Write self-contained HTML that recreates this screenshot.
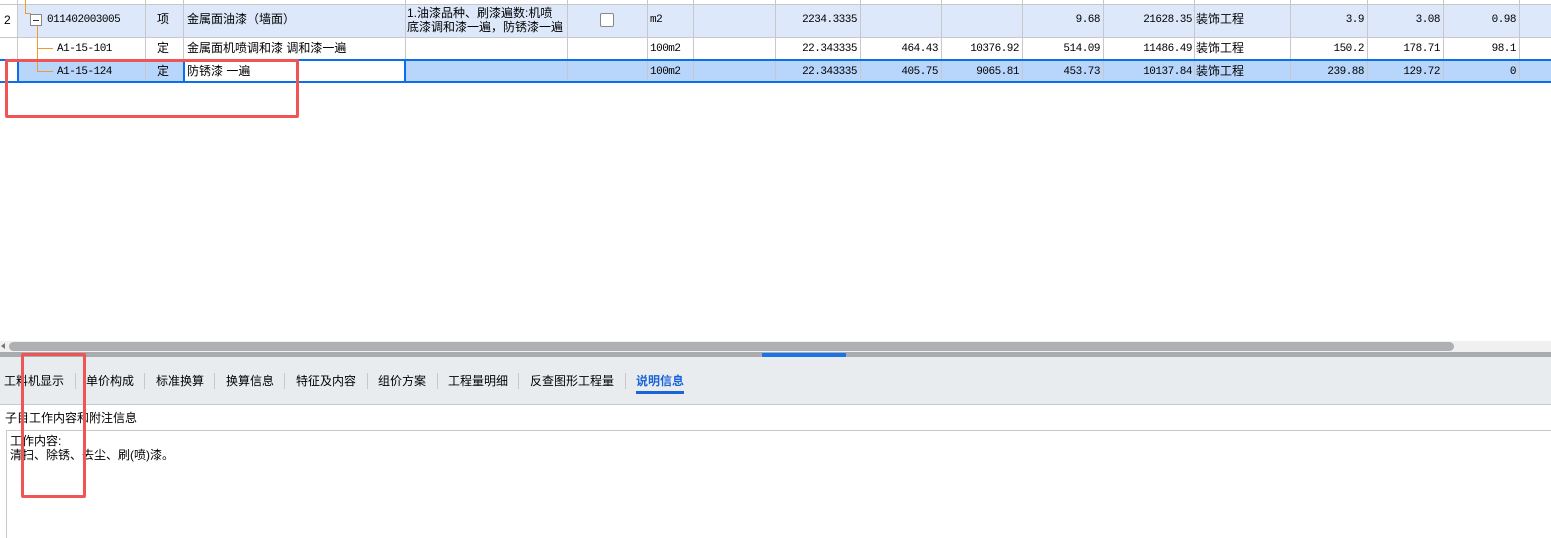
<!DOCTYPE html><html><head><meta charset="utf-8"><style>
*{margin:0;padding:0;box-sizing:border-box}
body{width:1551px;height:538px;overflow:hidden;background:#fff;font-family:"Liberation Sans","Noto Sans CJK SC",sans-serif;font-size:12px;color:#000;position:relative}
.a{position:absolute}
.vl{position:absolute;width:1px;background:#c8c8c8}
.hl{position:absolute;height:1px;background:#c8c8c8;left:0;width:1551px}
.t{position:absolute;white-space:nowrap;line-height:14px}
.m{font-family:"Liberation Mono","Noto Sans CJK SC",monospace;font-size:11px;letter-spacing:-0.5px}
.r{text-align:right}
.tb{font-size:12px;top:374px}
</style></head><body>
<div class="a" style="left:17px;top:5px;width:1534px;height:32px;background:#dde9fb"></div>
<div class="a" style="left:17px;top:60px;width:1534px;height:22px;background:#b8d6fb"></div>
<div class="a" style="left:185px;top:60px;width:220px;height:22px;background:#fff"></div>
<div class="hl" style="top:4px"></div><div class="hl" style="top:37px"></div><div class="hl" style="top:60px"></div>
<div class="vl" style="left:17px;top:0;height:82px"></div>
<div class="vl" style="left:145px;top:0;height:82px"></div>
<div class="vl" style="left:183px;top:0;height:82px"></div>
<div class="vl" style="left:405px;top:0;height:82px"></div>
<div class="vl" style="left:567px;top:0;height:82px"></div>
<div class="vl" style="left:647px;top:0;height:82px"></div>
<div class="vl" style="left:693px;top:0;height:82px"></div>
<div class="vl" style="left:775px;top:0;height:82px"></div>
<div class="vl" style="left:860px;top:0;height:82px"></div>
<div class="vl" style="left:941px;top:0;height:82px"></div>
<div class="vl" style="left:1022px;top:0;height:82px"></div>
<div class="vl" style="left:1103px;top:0;height:82px"></div>
<div class="vl" style="left:1194px;top:0;height:82px"></div>
<div class="vl" style="left:1290px;top:0;height:82px"></div>
<div class="vl" style="left:1367px;top:0;height:82px"></div>
<div class="vl" style="left:1443px;top:0;height:82px"></div>
<div class="vl" style="left:1519px;top:0;height:82px"></div>
<div class="a" style="left:0;top:59px;width:1551px;height:2px;background:#0a6fe8"></div>
<div class="a" style="left:0;top:81px;width:1551px;height:2px;background:#0a6fe8"></div>
<div class="a" style="left:17px;top:59px;width:2px;height:24px;background:#0a6fe8"></div>
<div class="a" style="left:183px;top:59px;width:2px;height:24px;background:#0a6fe8"></div>
<div class="a" style="left:404px;top:59px;width:2px;height:24px;background:#0a6fe8"></div>
<div class="a" style="left:25px;top:0;width:1px;height:14px;background:#f39a2c;z-index:2"></div>
<div class="a" style="left:25px;top:13px;width:6px;height:1px;background:#f39a2c;z-index:2"></div>
<div class="a" style="left:37px;top:26px;width:1px;height:46px;background:#f39a2c;z-index:2"></div>
<div class="a" style="left:37px;top:48px;width:16px;height:1px;background:#f39a2c;z-index:2"></div>
<div class="a" style="left:37px;top:71px;width:16px;height:1px;background:#f39a2c;z-index:2"></div>
<div class="a" style="left:30px;top:14px;width:12px;height:12px;border:1px solid #888;background:#fff;z-index:3"></div>
<div class="a" style="left:33px;top:20px;width:6px;height:1px;background:#333;z-index:4"></div>
<div class="t" style="left:4px;top:13px">2</div>
<div class="t m" style="left:47px;top:13px">011402003005</div>
<div class="t" style="left:157px;top:12px">项</div>
<div class="t" style="left:187px;top:12px">金属面油漆（墙面）</div>
<div class="t" style="left:407px;top:6px;line-height:14px">1.油漆品种、刷漆遍数:机喷<br>底漆调和漆一遍，防锈漆一遍</div>
<div class="a" style="left:600px;top:13px;width:14px;height:14px;border:1px solid #888;border-radius:2px;background:#fff"></div>
<div class="t m" style="left:650px;top:13px">m2</div>
<div class="t m r" style="left:775px;top:13px;width:82px">2234.3335</div>
<div class="t m r" style="left:1022px;top:13px;width:78px">9.68</div>
<div class="t m r" style="left:1103px;top:13px;width:89px">21628.35</div>
<div class="t" style="left:1196px;top:12px">装饰工程</div>
<div class="t m r" style="left:1290px;top:13px;width:74px">3.9</div>
<div class="t m r" style="left:1367px;top:13px;width:73px">3.08</div>
<div class="t m r" style="left:1443px;top:13px;width:73px">0.98</div>

<div class="t m" style="left:57px;top:42px">A1-15-101</div>
<div class="t" style="left:157px;top:41px">定</div>
<div class="t" style="left:187px;top:41px">金属面机喷调和漆 调和漆一遍</div>
<div class="t m" style="left:650px;top:42px">100m2</div>
<div class="t m r" style="left:775px;top:42px;width:82px">22.343335</div>
<div class="t m r" style="left:860px;top:42px;width:78px">464.43</div>
<div class="t m r" style="left:941px;top:42px;width:78px">10376.92</div>
<div class="t m r" style="left:1022px;top:42px;width:78px">514.09</div>
<div class="t m r" style="left:1103px;top:42px;width:89px">11486.49</div>
<div class="t" style="left:1196px;top:41px">装饰工程</div>
<div class="t m r" style="left:1290px;top:42px;width:74px">150.2</div>
<div class="t m r" style="left:1367px;top:42px;width:73px">178.71</div>
<div class="t m r" style="left:1443px;top:42px;width:73px">98.1</div>

<div class="t m" style="left:57px;top:65px">A1-15-124</div>
<div class="t" style="left:157px;top:64px">定</div>
<div class="t" style="left:187px;top:64px">防锈漆 一遍</div>
<div class="t m" style="left:650px;top:65px">100m2</div>
<div class="t m r" style="left:775px;top:65px;width:82px">22.343335</div>
<div class="t m r" style="left:860px;top:65px;width:78px">405.75</div>
<div class="t m r" style="left:941px;top:65px;width:78px">9065.81</div>
<div class="t m r" style="left:1022px;top:65px;width:78px">453.73</div>
<div class="t m r" style="left:1103px;top:65px;width:89px">10137.84</div>
<div class="t" style="left:1196px;top:64px">装饰工程</div>
<div class="t m r" style="left:1290px;top:65px;width:74px">239.88</div>
<div class="t m r" style="left:1367px;top:65px;width:73px">129.72</div>
<div class="t m r" style="left:1443px;top:65px;width:73px">0</div>

<div class="a" style="left:0;top:341px;width:1551px;height:11px;background:#f0f0f0"></div>
<div class="a" style="left:9px;top:342px;width:1445px;height:9px;border-radius:5px;background:#aeb0b4"></div>
<div class="a" style="left:1px;top:343px;width:0;height:0;border-top:3px solid transparent;border-bottom:3px solid transparent;border-right:4px solid #777"></div>
<div class="a" style="left:0;top:352px;width:1551px;height:5px;background:#a9abae"></div>
<div class="a" style="left:762px;top:353px;width:84px;height:4px;background:#1a73e8"></div>
<div class="a" style="left:0;top:357px;width:1551px;height:47px;background:#e9ecef"></div>
<div class="hl" style="top:404px;background:#c8c8c8"></div>
<div class="t tb" style="left:4px">工料机显示</div>
<div class="t tb" style="left:86px">单价构成</div>
<div class="t tb" style="left:156px">标准换算</div>
<div class="t tb" style="left:226px">换算信息</div>
<div class="t tb" style="left:296px">特征及内容</div>
<div class="t tb" style="left:378px">组价方案</div>
<div class="t tb" style="left:448px">工程量明细</div>
<div class="t tb" style="left:530px">反查图形工程量</div>
<div class="t tb" style="left:636px;color:#1a63d8;font-weight:bold">说明信息</div>
<div class="a" style="left:636px;top:391px;width:48px;height:3px;background:#1a63d8"></div>
<div class="vl" style="left:75px;top:373px;height:16px"></div>
<div class="vl" style="left:144px;top:373px;height:16px"></div>
<div class="vl" style="left:214px;top:373px;height:16px"></div>
<div class="vl" style="left:284px;top:373px;height:16px"></div>
<div class="vl" style="left:367px;top:373px;height:16px"></div>
<div class="vl" style="left:437px;top:373px;height:16px"></div>
<div class="vl" style="left:518px;top:373px;height:16px"></div>
<div class="vl" style="left:625px;top:373px;height:16px"></div>
<div class="t" style="left:5px;top:411px">子目工作内容和附注信息</div>
<div class="hl" style="top:430px;left:7px;width:1544px"></div>
<div class="vl" style="left:6px;top:430px;height:108px"></div>
<div class="t" style="left:10px;top:434px">工作内容:<br>清扫、除锈、去尘、刷(喷)漆。</div>
<div class="a" style="left:5px;top:59px;width:294px;height:59px;border:3px solid #f05454;border-radius:2px;z-index:5"></div>
<div class="a" style="left:21px;top:353px;width:65px;height:145px;border:3px solid #f05454;border-radius:2px;z-index:5"></div>
</body></html>
